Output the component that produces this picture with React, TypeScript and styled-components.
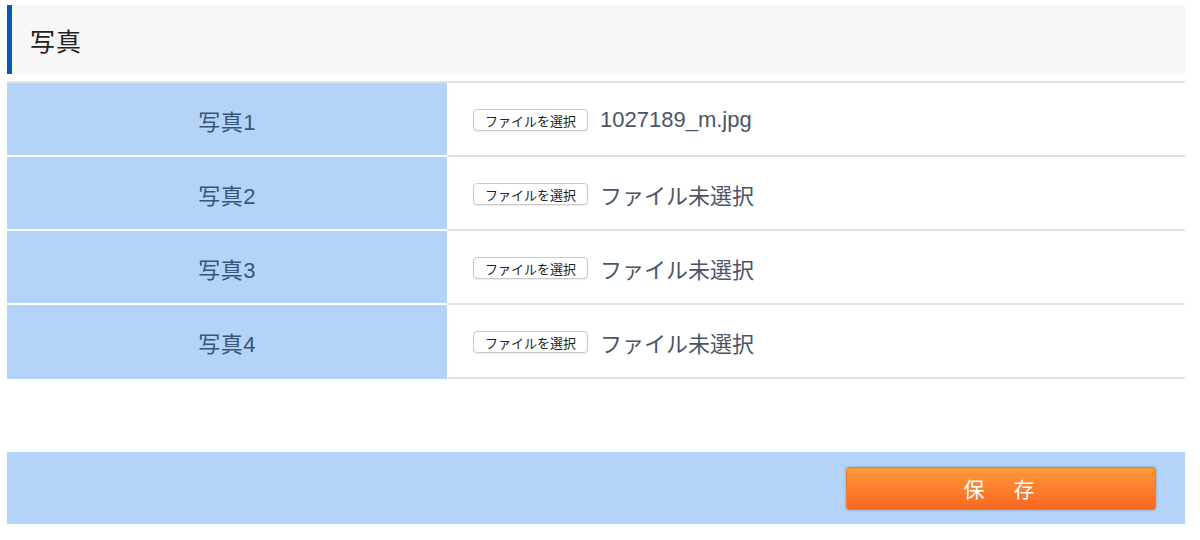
import React from "react";
import styled, { createGlobalStyle } from "styled-components";

const GlobalStyle = createGlobalStyle`
  html, body {
    margin: 0;
    padding: 0;
    background: #ffffff;
  }
  body {
    font-family: "Liberation Sans", "Noto Sans CJK JP", sans-serif;
  }
`;

const Page = styled.div`
  width: 1178px;
  padding: 5px 15px 16px 7px;
`;

const SectionHeader = styled.div`
  height: 69px;
  display: flex;
  align-items: center;
  background: #f7f7f7;
  border-left: 5px solid #0b57b6;
  padding-left: 18px;
  box-sizing: border-box;
`;

const SectionTitle = styled.h2`
  margin: 0;
  font-size: 25px;
  font-weight: 400;
  color: #222222;
  letter-spacing: 1px;
`;

const Table = styled.div`
  margin-top: 7px;
  border-top: 2px solid #dfe4ea;
  display: flex;
  flex-direction: column;
`;

const Row = styled.div`
  display: grid;
  grid-template-columns: 440px 1fr;
  height: 74px;
`;

const LabelCell = styled.div<{ $last?: boolean }>`
  display: flex;
  align-items: center;
  justify-content: center;
  padding-top: 2px;
  background: #b3d4f8;
  border-bottom: 2px solid ${(p) => (p.$last ? "#b3d4f8" : "#ffffff")};
  font-size: 22px;
  color: #3a5576;
  letter-spacing: 0.5px;
`;

const ValueCell = styled.div`
  display: flex;
  align-items: center;
  gap: 12px;
  padding-left: 25px;
  padding-top: 2px;
  border-left: 1px solid #ffffff;
  border-bottom: 2px solid #dfe4ea;
`;

const FileButton = styled.button`
  height: 22px;
  padding: 0 11px;
  font-family: "Liberation Sans", "Noto Sans CJK JP", sans-serif;
  font-size: 13px;
  color: #222222;
  background: #ffffff;
  border: 1px solid #c9c9c9;
  border-radius: 4px;
  box-shadow: 0 1px 1px rgba(0, 0, 0, 0.08);
  display: flex;
  align-items: center;
`;

const FileName = styled.span`
  font-size: 22px;
  color: #4a5567;
`;

const Footer = styled.div`
  margin-top: 73px;
  height: 72px;
  background: #b3d4f8;
  display: flex;
  align-items: center;
  justify-content: flex-end;
  padding-right: 29px;
`;

const SaveButton = styled.button`
  width: 310px;
  height: 43px;
  border: 1px solid #f27a2c;
  border-radius: 3px;
  background: linear-gradient(to bottom, #fd9838, #fb6822);
  box-shadow: 0 0 3px rgba(0, 0, 0, 0.25);
  color: #ffffff;
  font-family: "Liberation Sans", "Noto Sans CJK JP", sans-serif;
  font-size: 21px;
  letter-spacing: 4px;
  cursor: pointer;
`;

const photos = [
  { label: "写真1", file: "1027189_m.jpg" },
  { label: "写真2", file: "ファイル未選択" },
  { label: "写真3", file: "ファイル未選択" },
  { label: "写真4", file: "ファイル未選択" },
];

export default function App() {
  return (
    <>
      <GlobalStyle />
      <Page>
        <SectionHeader>
          <SectionTitle>写真</SectionTitle>
        </SectionHeader>
        <Table>
          {photos.map((p, i) => (
            <Row key={p.label}>
              <LabelCell $last={i === photos.length - 1}>{p.label}</LabelCell>
              <ValueCell>
                <FileButton>ファイルを選択</FileButton>
                <FileName>{p.file}</FileName>
              </ValueCell>
            </Row>
          ))}
        </Table>
        <Footer>
          <SaveButton>保　存</SaveButton>
        </Footer>
      </Page>
    </>
  );
}
